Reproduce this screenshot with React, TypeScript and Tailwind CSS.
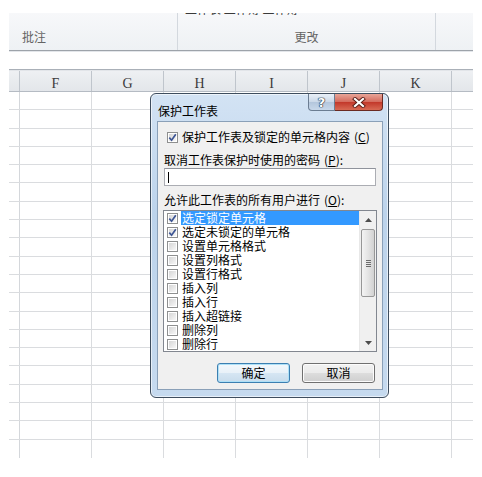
import React from "react";

const cols = ["F", "G", "H", "I", "J", "K"];

const items = [
    { label: "选定锁定单元格", checked: true, selected: true },
    { label: "选定未锁定的单元格", checked: true },
    { label: "设置单元格格式" },
    { label: "设置列格式" },
    { label: "设置行格式" },
    { label: "插入列" },
    { label: "插入行" },
    { label: "插入超链接" },
    { label: "删除列" },
    { label: "删除行" },
];

const cjk = "[font-family:'Microsoft_YaHei','Noto_Sans_CJK_SC',sans-serif]";

function Check({ checked }: { checked?: boolean }) {
    return (
        <span className="w-[11px] h-[11px] shrink-0 border border-[#8e8f8f] bg-white p-[1px] flex">
            <span className="flex-1 bg-[linear-gradient(135deg,#d6d6d6,#f7f7f7)] flex items-center justify-center">
                {checked && (
                    <svg width="9" height="9" viewBox="0 0 9 9" className="-m-[1px]">
                        <path d="M1.3 4.6 L3.6 7.2 L7.8 1.2" stroke="#3d5594" strokeWidth="1.7" fill="none" />
                    </svg>
                )}
            </span>
        </span>
    );
}

function Arrow({ up }: { up?: boolean }) {
    return (
        <svg width="7" height="4" viewBox="0 0 7 4">
            <path d={up ? "M0 4 L3.5 0 L7 4 Z" : "M0 0 L3.5 4 L7 0 Z"} fill="#4d4d4d" />
        </svg>
    );
}

function Mnemonic({ k }: { k: string }) {
    return (
        <span className="ml-[4px]">
            (<span className="underline underline-offset-1">{k}</span>)
        </span>
    );
}

export default function App() {
    return (
        <div className={`relative w-[482px] h-[477px] bg-white overflow-hidden ${cjk}`}>
            <div className="ml-[9px] w-[464px] pt-[13px]">
                {/* Ribbon groups */}
                <div className="h-[37px] flex bg-[linear-gradient(180deg,#f7f8fa,#eef1f4)]">
                    <div className="w-[169px] border-r border-[#d3d8de] flex items-end pb-[6px] pl-[13px] text-[12px] leading-[14px] text-[#646464]">
                        批注
                    </div>
                    <div className="w-[258px] border-r border-[#d3d8de] flex flex-col">
                        <div className="h-[3px] overflow-hidden pl-[7px]">
                            <div className="-mt-[11px] text-[12px] leading-[14px] text-[#3a3a3a]">工作表 工作簿 工作簿</div>
                        </div>
                        <div className="flex-1 flex items-end justify-center pb-[6px] text-[12px] leading-[14px] text-[#646464]">
                            更改
                        </div>
                    </div>
                    <div className="flex-1" />
                </div>
                <div className="h-[1px] bg-[#9da3aa]" />
                <div className="h-[1px] bg-[#e3e6ea]" />
                {/* Formula bar area */}
                <div className="h-[17px] bg-white" />
                <div className="h-[1px] bg-[#aab0b8]" />
                <div className="h-[1px] bg-[#e2e5e9]" />

                {/* Column headers */}
                <div className="h-[21px] flex bg-[linear-gradient(180deg,#eef0f3,#e3e6ea)] border-b border-[#b5bbc3] [font-family:'Liberation_Serif','DejaVu_Serif',serif] text-[14px] font-normal text-[#3a3a3a]">
                    <div className="w-[11px] border-r border-[#bfc5cc]" />
                    {cols.map((c) => (
                        <div key={c} className="w-[72px] border-r border-[#bfc5cc] flex items-center justify-center pt-[5px]">
                            {c}
                        </div>
                    ))}
                    <div className="flex-1" />
                </div>

                {/* Grid */}
                <div className="flex flex-col">
                    {Array.from({ length: 20 }).map((_, r) => (
                        <div key={r} className={`h-[18.3px] flex ${r < 19 ? "border-b border-[#dadcdf]" : ""}`}>
                            <div className="w-[11px] border-r border-[#d4d7db]" />
                            {cols.map((c) => (
                                <div key={c} className="w-[72px] border-r border-[#dadcdf]" />
                            ))}
                            <div className="flex-1" />
                        </div>
                    ))}
                </div>
            </div>

            {/* Protect sheet dialog */}
            <div className="absolute left-[150px] top-[93px] w-[239px] h-[305px] rounded-[6px] border border-[#3e4d5e] bg-[linear-gradient(180deg,#d3e3f4,#bcd3eb_40%,#c6daef)] flex flex-col shadow-[inset_0_0_0_1px_rgba(255,255,255,0.6)]">
                <div className="h-[27px] flex items-start">
                    <span className="pl-[7px] pt-[10px] text-[12px] leading-[14px] text-black">保护工作表</span>
                    <div className="ml-auto mr-[5px] flex">
                        <div className="w-[27px] h-[17px] rounded-bl-[4px] border border-t-0 border-[#6b7d92] bg-[linear-gradient(180deg,#e9f0f8,#cad8e8_50%,#b3c6dc_51%,#c8d8ea)] flex items-center justify-center">
                            <span className="[font-family:'DejaVu_Sans',sans-serif] font-bold text-[13px] leading-none text-white [text-shadow:0_0_1px_#26384c,0_0_1px_#26384c,0_0_1px_#26384c,0_0_1px_#26384c]">
                                ?
                            </span>
                        </div>
                        <div className="w-[48px] h-[17px] rounded-br-[4px] border border-t-0 border-l-0 border-[#6b2a22] bg-[linear-gradient(180deg,#e8a598,#d46a5c_50%,#c2372a_51%,#d86a54)] flex items-center justify-center">
                            <svg width="14" height="11" viewBox="0 0 14 11">
                                <path d="M3 2 L11 9 M11 2 L3 9" stroke="#5a1d16" strokeWidth="4" strokeLinecap="square" />
                                <path d="M3 2 L11 9 M11 2 L3 9" stroke="#ffffff" strokeWidth="2.2" strokeLinecap="square" />
                            </svg>
                        </div>
                    </div>
                </div>

                <div className="ml-[6px] w-[226px] mb-[7px] flex-1 border border-[#8aa0b8] bg-[#f0f0f0] flex flex-col pl-[6px] text-[12px] leading-[14px] text-black">
                    <div className="mt-[8px] h-[14px] flex items-center pl-[3px]">
                        <Check checked />
                        <span className="ml-[4px]">
                            保护工作表及锁定的单元格内容
                            <Mnemonic k="C" />
                        </span>
                    </div>
                    <div className="mt-[9px] h-[14px]">
                        取消工作表保护时使用的密码
                        <Mnemonic k="P" />:
                    </div>
                    <div className="mt-[1px] w-[212px] h-[18px] border border-[#abadb3] border-t-[#8f939c] bg-white flex items-center">
                        <span className="ml-[3px] w-[1px] h-[11px] bg-black" />
                    </div>
                    <div className="mt-[7px] h-[14px]">
                        允许此工作表的所有用户进行
                        <Mnemonic k="O" />:
                    </div>
                    <div className="mt-[3px] -ml-[1px] w-[214px] h-[142px] border border-[#828790] bg-white flex">
                        <div className="flex-1 flex flex-col">
                            {items.map((it) => (
                                <div key={it.label} className="h-[14px] flex items-center pl-[3px]">
                                    <Check checked={it.checked} />
                                    <span
                                        className={`ml-[3px] flex-1 h-[14px] pl-[1px] leading-[14px] ${
                                            it.selected ? "bg-[#3399ff] text-white" : ""
                                        }`}
                                    >
                                        {it.label}
                                    </span>
                                </div>
                            ))}
                        </div>
                        <div className="w-[17px] bg-[#f0f0f0] border-l border-[#e8e8e8] flex flex-col">
                            <div className="h-[17px] flex items-center justify-center">
                                <Arrow up />
                            </div>
                            <div className="mt-[1px] mx-[1px] h-[68px] rounded-[2px] border border-[#979797] bg-[linear-gradient(90deg,#f4f4f4,#e4e4e4_50%,#d2d2d2)] flex flex-col items-center justify-center gap-[1px]">
                                <span className="w-[5px] h-[1px] bg-[#6c6c6c]" />
                                <span className="w-[5px] h-[1px] bg-[#6c6c6c]" />
                                <span className="w-[5px] h-[1px] bg-[#6c6c6c]" />
                                <span className="w-[5px] h-[1px] bg-[#6c6c6c]" />
                            </div>
                            <div className="flex-1" />
                            <div className="h-[17px] flex items-center justify-center">
                                <Arrow />
                            </div>
                        </div>
                    </div>
                    <div className="mt-[11px] flex pl-[53px] gap-[12px]">
                        <button className="w-[73px] h-[20px] rounded-[3px] border border-[#3c7fb1] bg-[linear-gradient(180deg,#f3f8fc,#e8f1f8_50%,#d6e6f3_51%,#c8dcec)] shadow-[inset_0_0_0_1px_#aee0f7] text-[12px] leading-[14px] text-black">
                            确定
                        </button>
                        <button className="w-[73px] h-[20px] rounded-[3px] border border-[#707070] bg-[linear-gradient(180deg,#f2f2f2,#ebebeb_50%,#dddddd_51%,#cfcfcf)] shadow-[inset_0_0_0_1px_#fcfcfc] text-[12px] leading-[14px] text-black">
                            取消
                        </button>
                    </div>
                </div>
            </div>
        </div>
    );
}
